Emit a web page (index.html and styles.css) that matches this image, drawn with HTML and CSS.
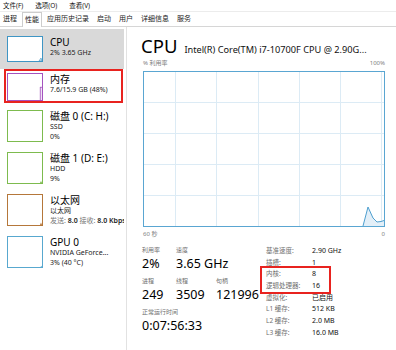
FILE: index.html
```html
<!DOCTYPE html>
<html lang="zh-CN">
<head>
<meta charset="utf-8">
<title>任务管理器</title>
<link rel="stylesheet" href="styles.css">
</head>
<body>
<div class="menubar">
  <span>文件(F)</span><span>选项(O)</span><span>查看(V)</span>
</div>
<div class="tabs">
  <span class="tab">进程</span>
  <span class="tab active">性能</span>
  <span class="tab">应用历史记录</span>
  <span class="tab">启动</span>
  <span class="tab">用户</span>
  <span class="tab">详细信息</span>
  <span class="tab">服务</span>
</div>
<div class="main">
  <div class="side">
    <div class="item sel">
      <div class="thumb t-cpu"><svg viewBox="0 0 34 24" width="34" height="24"><path d="M31 24 L33 21 L34 24 Z" fill="#cfe4f1" stroke="#3f95c4" stroke-width="0.6"/></svg></div>
      <div class="info two"><div class="name">CPU</div><div class="sub">2% 3.65 GHz</div></div>
    </div>
    <div class="item mem">
      <div class="thumb t-mem"><svg viewBox="0 0 34 26" width="34" height="26"><rect x="32" y="13" width="2" height="13" fill="#f1e3f6"/><line x1="32.3" y1="13" x2="32.3" y2="26" stroke="#a453bf" stroke-width="0.8"/><line x1="32" y1="13.3" x2="34" y2="13.3" stroke="#a453bf" stroke-width="0.8"/></svg></div>
      <div class="info two"><div class="name">内存</div><div class="sub">7.6/15.9 GB (48%)</div></div>
    </div>
    <div class="item disk first">
      <div class="thumb t-disk"></div>
      <div class="info"><div class="name">磁盘 0 (C: H:)</div><div class="sub">SSD</div><div class="sub">0%</div></div>
    </div>
    <div class="item disk">
      <div class="thumb t-disk"><svg viewBox="0 0 34 30" width="34" height="30"><path d="M32 30 L33 28 L34 30 Z" fill="#75b546"/></svg></div>
      <div class="info"><div class="name">磁盘 1 (D: E:)</div><div class="sub">HDD</div><div class="sub">9%</div></div>
    </div>
    <div class="item disk">
      <div class="thumb t-eth"><svg viewBox="0 0 34 30" width="34" height="30"><path d="M32 30 L33 27.5 L34 30 Z" fill="#b5773a"/></svg></div>
      <div class="info"><div class="name">以太网</div><div class="sub">以太网</div><div class="sub"><span class="k">发送:</span> <b>8.0</b> <span class="k">接收:</span> <b>8.0 Kbps</b></div></div>
    </div>
    <div class="item disk">
      <div class="thumb t-gpu"><svg viewBox="0 0 34 30" width="34" height="30"><path d="M32.5 30 L33.3 28.8 L34 30 Z" fill="#58a8cf"/></svg></div>
      <div class="info"><div class="name">GPU 0</div><div class="sub">NVIDIA GeForce...</div><div class="sub">3% (40 °C)</div></div>
    </div>
  </div>

  <div class="detail">
    <div class="head">
      <h1>CPU</h1>
      <span class="model">Intel(R) Core(TM) i7-10700F CPU @ 2.90G...</span>
    </div>
    <div class="axis top"><span>% 利用率</span><span>100%</span></div>
    <div class="graph">
      <svg viewBox="0 0 240 154" width="240" height="154">
        <g stroke="#dcebf5" stroke-width="1">
          <line x1="31.5" y1="0" x2="31.5" y2="154"/>
          <line x1="72.5" y1="0" x2="72.5" y2="154"/>
          <line x1="114.5" y1="0" x2="114.5" y2="154"/>
          <line x1="155.5" y1="0" x2="155.5" y2="154"/>
          <line x1="196.5" y1="0" x2="196.5" y2="154"/>
          <line x1="237.5" y1="0" x2="237.5" y2="154"/>
          <line x1="0" y1="30.5" x2="240" y2="30.5"/>
          <line x1="0" y1="61.5" x2="240" y2="61.5"/>
          <line x1="0" y1="92.5" x2="240" y2="92.5"/>
          <line x1="0" y1="123.5" x2="240" y2="123.5"/>
        </g>
        <path d="M219 154 L224 135 L229 146 L233 150 L237 149.5 L240 148.5 L240 154 Z" fill="#e3eff8"/>
        <path d="M219 154 L224 135 L229 146 L233 150 L237 149.5 L240 148.5" fill="none" stroke="#4e9fcf" stroke-width="1"/>
      </svg>
    </div>
    <div class="axis bottom"><span>60 秒</span><span>0</span></div>

    <div class="stats">
      <div class="stats-left">
        <div class="srow">
          <div class="cell c1"><div class="lbl">利用率</div><div class="val">2%</div></div>
          <div class="cell c2"><div class="lbl">速度</div><div class="val">3.65 GHz</div></div>
        </div>
        <div class="srow">
          <div class="cell c1"><div class="lbl">进程</div><div class="val">249</div></div>
          <div class="cell c2"><div class="lbl">线程</div><div class="val">3509</div></div>
          <div class="cell"><div class="lbl">句柄</div><div class="val">121996</div></div>
        </div>
        <div class="srow">
          <div class="cell"><div class="lbl">正常运行时间</div><div class="val">0:07:56:33</div></div>
        </div>
      </div>
      <div class="stats-right">
        <div class="prow"><span class="pk">基准速度:</span><span class="pv">2.90 GHz</span></div>
        <div class="prow"><span class="pk">插槽:</span><span class="pv">1</span></div>
        <div class="hl">
          <div class="prow"><span class="pk">内核:</span><span class="pv">8</span></div>
          <div class="prow"><span class="pk">逻辑处理器:</span><span class="pv">16</span></div>
        </div>
        <div class="prow"><span class="pk">虚拟化:</span><span class="pv">已启用</span></div>
        <div class="prow"><span class="pk">L1 缓存:</span><span class="pv">512 KB</span></div>
        <div class="prow"><span class="pk">L2 缓存:</span><span class="pv">2.0 MB</span></div>
        <div class="prow"><span class="pk">L3 缓存:</span><span class="pv">16.0 MB</span></div>
      </div>
    </div>
  </div>
</div>
</body>
</html>
```

FILE: styles.css
```css
* { box-sizing: border-box; }

body {
  margin: 0;
  width: 396px;
  height: 350px;
  overflow: hidden;
  background: #fff;
  color: #000;
  font-family: "Noto Sans", "Noto Sans CJK SC", sans-serif;
}

.menubar {
  display: flex;
  gap: 12px;
  height: 12px;
  padding-left: 3px;
  font-size: 6.5px;
  line-height: 11px;
  color: #111;
  border-bottom: 1px solid #ececec;
}

.tabs {
  display: flex;
  height: 15px;
  font-size: 7px;
  line-height: 14px;
  color: #222;
  border-bottom: 1px solid #d6d6d6;
}

.tab {
  padding: 0 3px;
  margin-right: 2px;
  height: 14px;
}

.tab.active {
  padding: 0 2px;
  height: 15px;
  line-height: 13px;
  background: #fff;
  border: 1px solid #cdcdcd;
  border-bottom: none;
}

.main {
  display: flex;
  height: 323px;
}

.side {
  width: 127px;
  flex: none;
  padding-top: 2px;
  border-right: 1px solid #e2e2e2;
}

.item {
  display: flex;
  align-items: flex-start;
  gap: 7px;
  width: 124px;
  padding-left: 7px;
  white-space: nowrap;
  overflow: hidden;
}

.item.sel {
  height: 40px;
  padding-top: 7px;
  background: #d9d9d9;
}

.item.mem {
  width: 119px;
  height: 34px;
  margin-left: 4px;
  padding: 2px 0 0 1px;
  border: 2px solid #e8231f;
}

.item.disk {
  height: 42px;
  padding-top: 5px;
}

.item.disk.first {
  height: 44px;
  padding-top: 7px;
}

.thumb {
  flex: none;
  width: 36px;
  height: 32px;
  border: 1px solid;
  background: #fff;
}

.thumb svg { display: block; }

.t-cpu { height: 26px; border-color: #3f95c4; }
.t-mem { height: 28px; border-color: #a453bf; }
.t-disk { border-color: #7dbb4e; }
.t-eth { border-color: #b5773a; }
.t-gpu { border-color: #58a8cf; }

.info { min-width: 0; }

.name {
  font-size: 10px;
  line-height: 12px;
  color: #000;
}

.sub {
  font-size: 7px;
  line-height: 9.5px;
  color: #222;
}

.info.two .sub { line-height: 10px; }

.sub .k { color: #777; }
.sub b { font-weight: 600; color: #222; }

.detail {
  flex: 1;
  padding: 8px 11px 0 16px;
}

.head {
  display: flex;
  align-items: baseline;
  gap: 7px;
  height: 22px;
  margin-left: -2px;
  white-space: nowrap;
}

.head h1 {
  margin: 0;
  font-size: 18.5px;
  font-weight: normal;
  line-height: 22px;
}

.model {
  font-size: 9.2px;
  color: #111;
}

.axis {
  display: flex;
  justify-content: space-between;
  font-size: 6px;
  line-height: 8px;
  color: #808080;
}

.axis.top { margin-top: 2px; }
.axis.bottom { margin-top: 3px; }

.graph {
  height: 156px;
  margin-top: 4px;
  border: 1px solid #5aa6d2;
}

.graph svg { display: block; }

.stats {
  display: flex;
  align-items: flex-start;
  margin-top: 8px;
}

.stats-left {
  width: 124px;
  margin-left: -1px;
}

.srow {
  display: flex;
  margin-bottom: 6px;
}

.c1 { width: 34px; }
.c2 { width: 40px; }

.lbl {
  font-size: 6px;
  line-height: 8px;
  color: #707070;
  margin-bottom: 2px;
  white-space: nowrap;
}

.val {
  font-size: 12.5px;
  line-height: 15px;
  white-space: nowrap;
}

.stats-right {
  margin-top: -1px;
}

.prow {
  display: flex;
  height: 11.7px;
  line-height: 11.7px;
  white-space: nowrap;
}

.pk {
  width: 46px;
  font-size: 6.5px;
  color: #707070;
}

.pv {
  font-size: 7px;
  color: #111;
}

.hl {
  width: 71px;
  margin: -2px 0 -2px -6px;
  padding-left: 4px;
  border: 2px solid #e8231f;
}
```
